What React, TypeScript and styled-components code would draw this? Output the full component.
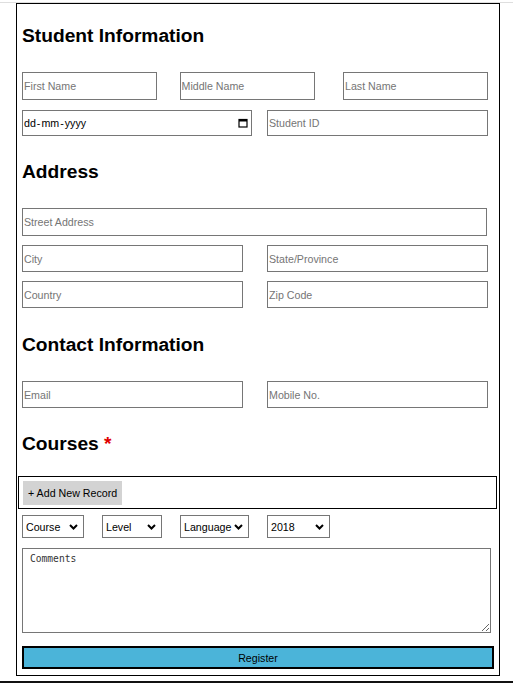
import React from "react";
import styled, { createGlobalStyle } from "styled-components";

const GlobalStyle = createGlobalStyle`
   html, body {
      margin: 0;
      padding: 0;
      background: #fff;
   }
   body {
      font-family: "Liberation Sans", Arial, sans-serif;
      color: #000;
   }
`;

type Col = { cols: string; gap?: number };

const rows: Record<string, Col> = {
   names: { cols: "135px 135px 145px" },
   idRow: { cols: "230px 221px", gap: 15 },
   wide: { cols: "465px" },
   halves: { cols: "221px 221px", gap: 24 },
};

const App: React.FunctionComponent = () => {
   return (
      <Page>
         <GlobalStyle />
         <TopRule />
         <FormCard onSubmit={(e) => e.preventDefault()}>
            <SectionTitle $mt={2} $mb={25}>
               Student Information
            </SectionTitle>
            <FieldRow $cols={rows.names.cols} $spread $mb={10}>
               <TextInput $h={28} placeholder="First Name" />
               <NameGap>
                  <TextInput $h={28} placeholder="Middle Name" />
               </NameGap>
               <TextInput $h={28} placeholder="Last Name" />
            </FieldRow>
            <FieldRow $cols={rows.idRow.cols} $gap={rows.idRow.gap}>
               <DateBox>
                  <DateText>
                     dd<Sep>-</Sep>mm<Sep>-</Sep>yyyy
                  </DateText>
                  <svg width="10" height="10" viewBox="0 0 10 10">
                     <rect x="1" y="1.5" width="8" height="7.5" fill="none" stroke="#000" strokeWidth="1.2" />
                     <rect x="1" y="1.5" width="8" height="2" fill="#000" />
                  </svg>
               </DateBox>
               <TextInput $h={26} placeholder="Student ID" />
            </FieldRow>

            <SectionTitle $mt={25} $mb={25}>
               Address
            </SectionTitle>
            <FieldRow $cols={rows.wide.cols} $mb={9}>
               <TextInput $h={28} placeholder="Street Address" />
            </FieldRow>
            <FieldRow $cols={rows.halves.cols} $gap={rows.halves.gap} $mb={9}>
               <TextInput $h={27} placeholder="City" />
               <TextInput $h={27} placeholder="State/Province" />
            </FieldRow>
            <FieldRow $cols={rows.halves.cols} $gap={rows.halves.gap}>
               <TextInput $h={27} placeholder="Country" />
               <TextInput $h={27} placeholder="Zip Code" />
            </FieldRow>

            <SectionTitle $mt={26} $mb={25}>
               Contact Information
            </SectionTitle>
            <FieldRow $cols={rows.halves.cols} $gap={rows.halves.gap}>
               <TextInput $h={27} placeholder="Email" />
               <TextInput $h={27} placeholder="Mobile No." />
            </FieldRow>

            <SectionTitle $mt={25} $mb={21}>
               Courses <Required>*</Required>
            </SectionTitle>
            <RecordBar>
               <AddButton type="button">+ Add New Record</AddButton>
            </RecordBar>

            <SelectRow>
               <SelectWrap $w={62}>
                  <Select defaultValue="course">
                     <option value="course">Course</option>
                  </Select>
                  <Chevron />
               </SelectWrap>
               <SelectWrap $w={60}>
                  <Select defaultValue="level">
                     <option value="level">Level</option>
                  </Select>
                  <Chevron />
               </SelectWrap>
               <SelectWrap $w={69}>
                  <Select defaultValue="language">
                     <option value="language">Language</option>
                  </Select>
                  <Chevron />
               </SelectWrap>
               <SelectWrap $w={63}>
                  <Select defaultValue="2018">
                     <option value="2018">2018</option>
                  </Select>
                  <Chevron />
               </SelectWrap>
            </SelectRow>

            <Comments placeholder="Comments" />

            <SubmitButton type="submit">Register</SubmitButton>
         </FormCard>
         <BottomRule />
      </Page>
   );
};

const Chevron: React.FunctionComponent = () => (
   <ChevronIcon width="9" height="6" viewBox="0 0 9 6">
      <path d="M1 1l3.5 3.5L8 1" fill="none" stroke="#000" strokeWidth="2" />
   </ChevronIcon>
);

export default App;

const Page = styled.div`
   width: 100%;
   min-height: 683px;
   overflow: hidden;
`;

const TopRule = styled.div`
   height: 1px;
   margin-top: 2px;
   background: #dedede;
`;

const BottomRule = styled.div`
   height: 2px;
   margin-top: 5px;
   background: #111;
`;

const FormCard = styled.form`
   margin: 0 13px 0 16px;
   border: 1px solid #000;
   padding: 19px 5px 6px;
   display: flex;
   flex-direction: column;
   align-items: flex-start;
`;

const SectionTitle = styled.h2<{ $mt: number; $mb: number }>`
   margin: ${(p) => p.$mt}px 0 ${(p) => p.$mb}px;
   font-size: 19.2px;
   line-height: 22px;
   font-weight: bold;
`;

const Required = styled.span`
   color: #e00000;
`;

const FieldRow = styled.div<{ $cols: string; $gap?: number; $mb?: number; $spread?: boolean }>`
   display: grid;
   grid-template-columns: ${(p) => p.$cols};
   column-gap: ${(p) => p.$gap ?? 0}px;
   justify-content: ${(p) => (p.$spread ? "space-between" : "start")};
   width: 466px;
   margin-bottom: ${(p) => p.$mb ?? 0}px;
`;

const NameGap = styled.div`
   margin-left: -3px;
   margin-right: 3px;
`;

const TextInput = styled.input<{ $h: number }>`
   box-sizing: border-box;
   height: ${(p) => p.$h}px;
   width: 100%;
   margin: 0;
   padding: 0 1px;
   border: 1px solid #767676;
   border-radius: 0;
   background: #fff;
   font-family: "Liberation Sans", Arial, sans-serif;
   font-size: 10.67px;
   color: #000;
   outline: none;

   &::placeholder {
      color: #757575;
   }
`;

const DateBox = styled.div`
   box-sizing: border-box;
   height: 26px;
   display: flex;
   align-items: center;
   justify-content: space-between;
   padding: 0 3px 0 1px;
   border: 1px solid #767676;
   background: #fff;
`;

const DateText = styled.span`
   font-size: 10.67px;
   color: #000;
`;

const Sep = styled.span`
   padding: 0 1px;
`;

const RecordBar = styled.div`
   box-sizing: border-box;
   width: 479px;
   height: 33px;
   margin-left: -4px;
   padding: 4px;
   border: 1px solid #000;
   display: flex;
   align-items: flex-start;
`;

const AddButton = styled.button`
   height: 24px;
   padding: 0 5px;
   margin: 0;
   border: none;
   background: #d3d3d3;
   font-family: "Liberation Sans", Arial, sans-serif;
   font-size: 10.67px;
   color: #000;
`;

const SelectRow = styled.div`
   display: flex;
   gap: 18px;
   margin-top: 6px;
`;

const SelectWrap = styled.div<{ $w: number }>`
   position: relative;
   width: ${(p) => p.$w}px;
   height: 23px;
`;

const Select = styled.select`
   appearance: none;
   box-sizing: border-box;
   width: 100%;
   height: 100%;
   margin: 0;
   padding: 0 0 0 3px;
   border: 1px solid #767676;
   border-radius: 0;
   background: #fff;
   font-family: "Liberation Sans", Arial, sans-serif;
   font-size: 10.67px;
   color: #000;
`;

const ChevronIcon = styled.svg`
   position: absolute;
   right: 6px;
   top: 9px;
   pointer-events: none;
`;

const Comments = styled.textarea`
   box-sizing: border-box;
   width: 469px;
   height: 85px;
   margin: 10px 0 0;
   padding: 4px 7px;
   border: 1px solid #767676;
   border-radius: 0;
   font-family: "DejaVu Sans Mono", "Liberation Mono", monospace;
   font-size: 9.6px;
   line-height: 12px;

   &::placeholder {
      color: #333;
   }
`;

const SubmitButton = styled.button`
   box-sizing: border-box;
   width: 472px;
   height: 23px;
   margin: 13px 0 0;
   border: 2px solid #000;
   background: #4bb4d9;
   font-family: "Liberation Sans", Arial, sans-serif;
   font-size: 10.67px;
   color: #000;
`;
